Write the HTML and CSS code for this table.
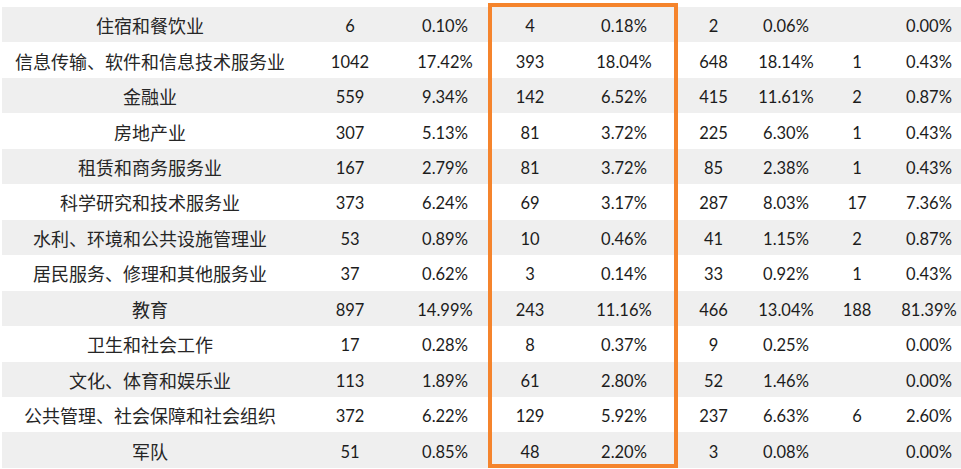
FILE: index.html
```html
<!DOCTYPE html>
<html lang="zh-CN">
<head>
<meta charset="utf-8">
<title>行业分布</title>
<link rel="stylesheet" href="styles.css">
</head>
<body>
<div class="sheet">
  <div class="row alt"><div class="name">住宿和餐饮业</div><div>6</div><div>0.10%</div><div>4</div><div>0.18%</div><div>2</div><div>0.06%</div><div></div><div>0.00%</div></div>
  <div class="row"><div class="name">信息传输、软件和信息技术服务业</div><div>1042</div><div>17.42%</div><div>393</div><div>18.04%</div><div>648</div><div>18.14%</div><div>1</div><div>0.43%</div></div>
  <div class="row alt"><div class="name">金融业</div><div>559</div><div>9.34%</div><div>142</div><div>6.52%</div><div>415</div><div>11.61%</div><div>2</div><div>0.87%</div></div>
  <div class="row"><div class="name">房地产业</div><div>307</div><div>5.13%</div><div>81</div><div>3.72%</div><div>225</div><div>6.30%</div><div>1</div><div>0.43%</div></div>
  <div class="row alt"><div class="name">租赁和商务服务业</div><div>167</div><div>2.79%</div><div>81</div><div>3.72%</div><div>85</div><div>2.38%</div><div>1</div><div>0.43%</div></div>
  <div class="row"><div class="name">科学研究和技术服务业</div><div>373</div><div>6.24%</div><div>69</div><div>3.17%</div><div>287</div><div>8.03%</div><div>17</div><div>7.36%</div></div>
  <div class="row alt"><div class="name">水利、环境和公共设施管理业</div><div>53</div><div>0.89%</div><div>10</div><div>0.46%</div><div>41</div><div>1.15%</div><div>2</div><div>0.87%</div></div>
  <div class="row"><div class="name">居民服务、修理和其他服务业</div><div>37</div><div>0.62%</div><div>3</div><div>0.14%</div><div>33</div><div>0.92%</div><div>1</div><div>0.43%</div></div>
  <div class="row alt"><div class="name">教育</div><div>897</div><div>14.99%</div><div>243</div><div>11.16%</div><div>466</div><div>13.04%</div><div>188</div><div>81.39%</div></div>
  <div class="row"><div class="name">卫生和社会工作</div><div>17</div><div>0.28%</div><div>8</div><div>0.37%</div><div>9</div><div>0.25%</div><div></div><div>0.00%</div></div>
  <div class="row alt"><div class="name">文化、体育和娱乐业</div><div>113</div><div>1.89%</div><div>61</div><div>2.80%</div><div>52</div><div>1.46%</div><div></div><div>0.00%</div></div>
  <div class="row"><div class="name">公共管理、社会保障和社会组织</div><div>372</div><div>6.22%</div><div>129</div><div>5.92%</div><div>237</div><div>6.63%</div><div>6</div><div>2.60%</div></div>
  <div class="row alt"><div class="name">军队</div><div>51</div><div>0.85%</div><div>48</div><div>2.20%</div><div>3</div><div>0.08%</div><div></div><div>0.00%</div></div>
  <div class="highlight"></div>
</div>
</body>
</html>
```
FILE: styles.css
```css
html, body {
  margin: 0;
  padding: 0;
  background: #ffffff;
  overflow: hidden;
}

.sheet {
  position: relative;
  padding: 7px 0 0 2px;
  width: 963px;
  font-family: Lato, "Noto Sans CJK SC", sans-serif;
  font-size: 16.5px;
  color: #1c1c1c;
}

.row {
  display: grid;
  grid-template-columns: 296px 104px 86px 84px 104px 75px 70px 72px 72px;
  height: 35.46px;
  align-items: center;
  text-align: center;
}

.row.alt {
  background: #efefef;
}

.row > div {
  padding-top: 3px;
  white-space: nowrap;
}

.row > .name {
  font-family: "Noto Sans CJK SC", sans-serif;
  font-size: 18px;
  color: #262626;
  padding-top: 1px;
}

.highlight {
  position: absolute;
  left: 488px;
  top: 3px;
  width: 190px;
  height: 465px;
  box-sizing: border-box;
  border: 4px solid #f5842c;
}
```
